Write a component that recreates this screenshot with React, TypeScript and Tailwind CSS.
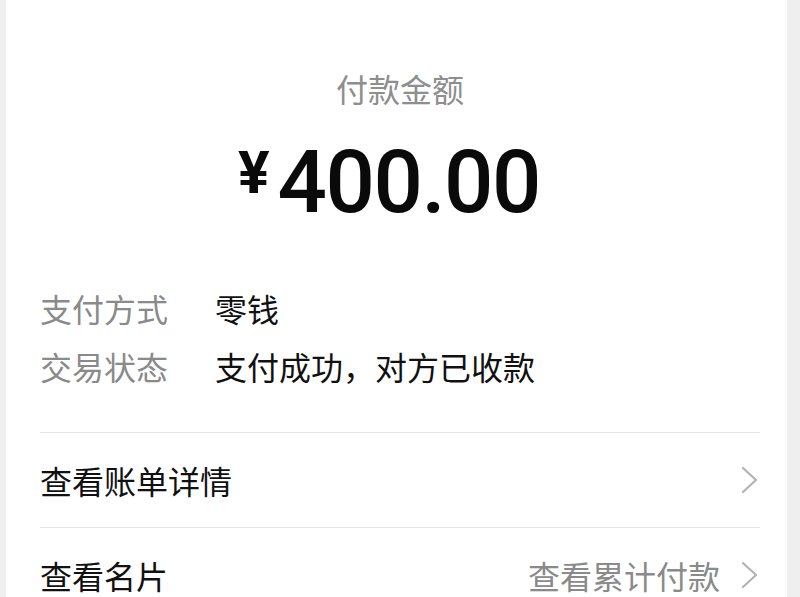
const cjk = { fontFamily: '"Noto Sans CJK SC", "Noto Sans", sans-serif' };
const num = { fontFamily: "Roboto, sans-serif" };

function Chevron() {
  return (
    <svg width="20" height="28" viewBox="0 0 20 28" fill="none" className="shrink-0">
      <path d="M3 2 L16 14 L3 26" stroke="#b3b3b3" strokeWidth="2.2" strokeLinecap="round" strokeLinejoin="round" />
    </svg>
  );
}

const detalles = [
  { label: "支付方式", value: "零钱" },
  { label: "交易状态", value: "支付成功，对方已收款" },
];

export default function App() {
  return (
    <div className="w-[800px] h-[597px] overflow-hidden bg-[#efefef] flex" style={cjk}>
      <div className="ml-[6px] w-[781px] h-full bg-white pl-[34px] pr-[27px] pt-[68px]">
        {/* cabecera del monto */}
        <div className="text-center text-[32px] leading-[40px] text-[#8e8e8e]">付款金额</div>
        <div className="mt-[31px] flex justify-center items-start pr-[22px] text-[#0a0a0a]">
          <span className="mt-[4px] mr-[8px] text-[59px] leading-none font-bold" style={num}>
            ¥
          </span>
          <span className="text-[87px] leading-none font-medium tracking-[-1.5px]" style={num}>
            400.00
          </span>
        </div>

        {/* datos de la transacción */}
        <div className="mt-[53px]">
          {detalles.map((d) => (
            <div key={d.label} className="flex text-[32px] leading-[58px]">
              <span className="w-[175px] text-[#8a8a8a]">{d.label}</span>
              <span className="text-[#111111]">{d.value}</span>
            </div>
          ))}
        </div>

        <div className="mt-[37px] border-t border-[#e6e6e6] h-[95px] flex items-center justify-between">
          <span className="text-[32px] text-[#111111]">查看账单详情</span>
          <Chevron />
        </div>
        <div className="border-t border-[#e6e6e6] h-[95px] flex items-center justify-between">
          <span className="text-[32px] text-[#111111]">查看名片</span>
          <div className="flex items-center gap-[20px]">
            <span className="text-[32px] text-[#8a8a8a]">查看累计付款</span>
            <Chevron />
          </div>
        </div>
      </div>
    </div>
  );
}
